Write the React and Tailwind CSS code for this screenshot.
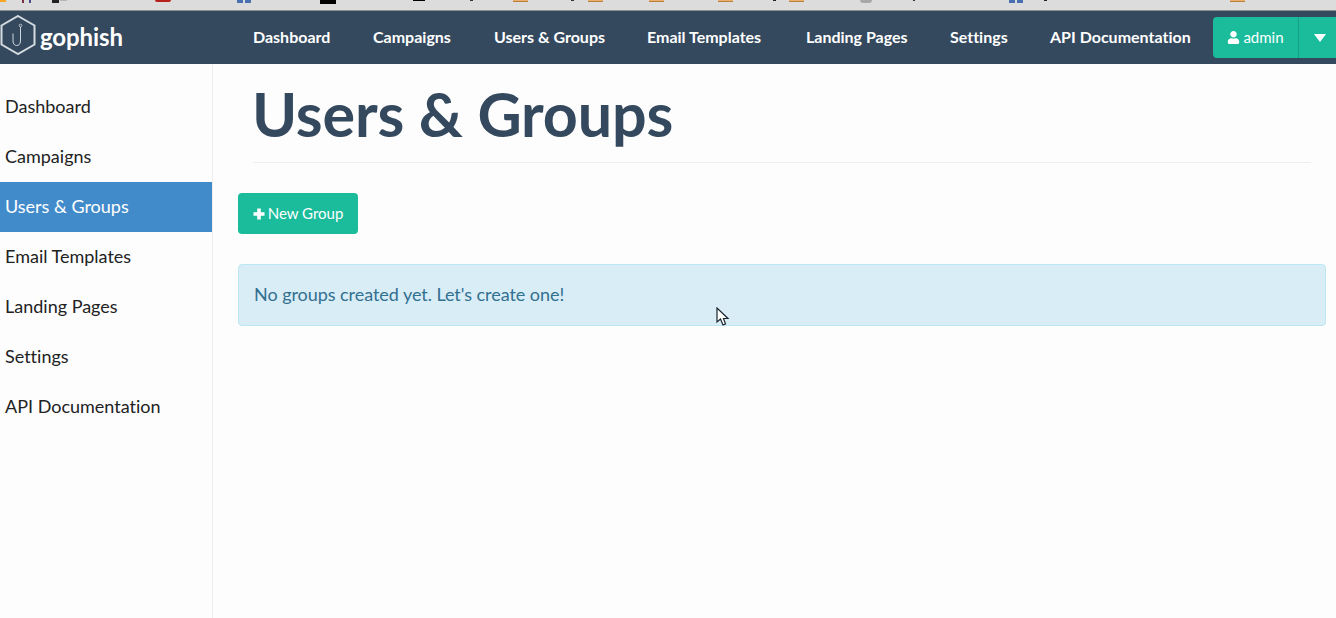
import React from 'react';
import { FaUser } from 'react-icons/fa';

const topLinks = [
    ['Dashboard', 'w-[78px]'],
    ['Campaigns', 'w-[79px]'],
    ['Users & Groups', 'w-[111px]'],
    ['Email Templates', 'w-[117px]'],
    ['Landing Pages', 'w-[102px]'],
    ['Settings', 'w-[58px]'],
    ['API Documentation', 'w-[142px]'],
];

const sideLinks = ['Dashboard', 'Campaigns', 'Users & Groups', 'Email Templates', 'Landing Pages', 'Settings', 'API Documentation'];

// what is left of the browser's bookmark bar above the page
const crumbs = [
    'left-0 w-[6px] h-[2px] bg-[#f5a623]',
    'left-[22px] w-[2px] h-[3px] bg-[#7a2a4a]',
    'left-[29px] w-[2px] h-[3px] bg-[#4a4a8a]',
    'left-[52px] w-[7px] h-[3px] bg-[#222222]',
    'left-[60px] w-[7px] h-[1px] bg-[#b5b5b5]',
    'left-[155px] w-[16px] h-[2px] bg-[#b8201c] rounded-b-[4px]',
    'left-[237px] w-[6px] h-[3px] bg-[#4a6fb0]',
    'left-[245px] w-[6px] h-[3px] bg-[#4a6fb0]',
    'left-[320px] w-[16px] h-[4px] bg-[#000000]',
    'left-[413px] w-[12px] h-[1px] bg-[#000000]',
    'left-[470px] w-[3px] h-[1px] bg-[#333333]',
    'left-[513px] w-[15px] h-[2px] bg-[#e8b06c] border-b border-[#b8803c]',
    'left-[571px] w-[3px] h-[1px] bg-[#333333]',
    'left-[588px] w-[15px] h-[2px] bg-[#e8b06c] border-b border-[#b8803c]',
    'left-[649px] w-[15px] h-[2px] bg-[#e8b06c] border-b border-[#b8803c]',
    'left-[718px] w-[15px] h-[2px] bg-[#e8b06c] border-b border-[#b8803c]',
    'left-[773px] w-[3px] h-[1px] bg-[#222222]',
    'left-[789px] w-[15px] h-[2px] bg-[#e8b06c] border-b border-[#b8803c]',
    'left-[860px] w-[12px] h-[3px] bg-[#a8a8a8] rounded-b-[6px]',
    'left-[913px] w-[2px] h-[1px] bg-[#333333]',
    'left-[1009px] w-[6px] h-[3px] bg-[#4a6fb0]',
    'left-[1017px] w-[6px] h-[3px] bg-[#4a6fb0]',
    'left-[1044px] w-[3px] h-[1px] bg-[#222222]',
    'left-[1230px] w-[15px] h-[2px] bg-[#e8b06c] border-b border-[#b8803c]',
];

const Logo = () => (
    <svg width="36" height="40" viewBox="0 0 36 40" fill="none" className="shrink-0 mb-[5px]">
        <path d="M18 1 L34.5 10.5 V29.5 L18 39 L1.5 29.5 V10.5 Z" stroke="#d5dbe0" strokeWidth="2" />
        <circle cx="20.5" cy="10.5" r="1.3" stroke="#d5dbe0" strokeWidth="0.8" />
        <path d="M20.5 12 V26 C20.5 32 13 32 13 26 V18.5" stroke="#cfd6dc" strokeWidth="1" />
    </svg>
);

// the heavy plus of the button, FaPlus comes out too thin at this size
const PlusIcon = () => (
    <svg width="12" height="12" viewBox="0 0 12 12" fill="#ffffff" className="shrink-0">
        <path d="M4.2 0.5 H7.8 V4.2 H11.5 V7.8 H7.8 V11.5 H4.2 V7.8 H0.5 V4.2 H4.2 Z" />
    </svg>
);

const Cursor = () => (
    <svg width="14" height="20" viewBox="0 0 14 20" className="absolute left-[716px] top-[307px]">
        <path d="M1 1 V15 L4.5 12 L7 18 L9.5 17 L7.5 11.5 L12 11.5 Z" fill="#ffffff" stroke="#1c2430" strokeWidth="1.2" />
    </svg>
);

export default function App() {
    return (
        <div className="relative min-h-[618px] bg-[#fdfdfd] font-['Lato','Liberation_Sans',sans-serif] [font-variant-ligatures:none] overflow-hidden">
            <div className="relative h-[11px] bg-[#dcdcdc] border-b border-[#8f8f8f]">
                {crumbs.map((c) => (
                    <span key={c} className={`absolute top-0 ${c}`}></span>
                ))}
            </div>

            <nav className="h-[53px] bg-[#34495e] flex items-center">
                <div className="w-[253px] flex items-center gap-[4px]">
                    <Logo />
                    <span className="text-white text-[24px] font-bold leading-none tracking-[-0.1px] mb-[2px]">gophish</span>
                </div>
                <div className="flex items-center gap-[42px] flex-1 mb-[2px]">
                    {topLinks.map(([label, w]) => (
                        <a key={label} className={`${w} text-white text-[16px] font-bold whitespace-nowrap`}>{label}</a>
                    ))}
                </div>
                <div className="flex h-[41px] w-[123px] text-white bg-[#1abc9c] rounded-l-[4px] mb-[1px]">
                    <div className="w-[86px] flex items-center justify-center gap-[3px] text-[15px] border-r border-[#16a085]">
                        <FaUser className="text-[13px]" />
                        <span>admin</span>
                    </div>
                    <div className="flex-1 flex items-center justify-center">
                        <span className="w-0 h-0 mt-[1px] ml-[5px] border-x-[6px] border-x-transparent border-t-[8px] border-t-white"></span>
                    </div>
                </div>
            </nav>

            <div className="flex min-h-[554px]">
                <aside className="w-[213px] shrink-0 border-r border-[#eeeeee] pt-[18px]">
                    {sideLinks.map((label) => (
                        <a
                            key={label}
                            className={`block h-[50px] leading-[48px] pl-[5px] text-[18px] ${label === 'Users & Groups' ? 'bg-[#428bca] text-white' : 'text-[#222222]'}`}
                        >
                            {label}
                        </a>
                    ))}
                </aside>
                <main className="flex-1 pl-[25px] pr-[10px]">
                    <div className="mx-[15px] h-[99px] border-b border-[#eeeeee]">
                        <h1 className="text-[#34495e] text-[61px] font-bold leading-[100px] tracking-[-0.15px] -ml-[1px]">Users &amp; Groups</h1>
                    </div>
                    <button className="mt-[30px] h-[41px] w-[120px] flex items-center justify-center gap-[3px] bg-[#1abc9c] text-white text-[15px] rounded-[4px]">
                        <PlusIcon />
                        New Group
                    </button>
                    <div className="mt-[30px] h-[62px] flex items-center px-[15px] pb-[2px] bg-[#d9edf7] border border-[#bce8f1] rounded-[4px] text-[#31708f] text-[18px] tracking-[-0.05px]">
                        No groups created yet. Let's create one!
                    </div>
                </main>
            </div>
            <Cursor />
        </div>
    );
}
